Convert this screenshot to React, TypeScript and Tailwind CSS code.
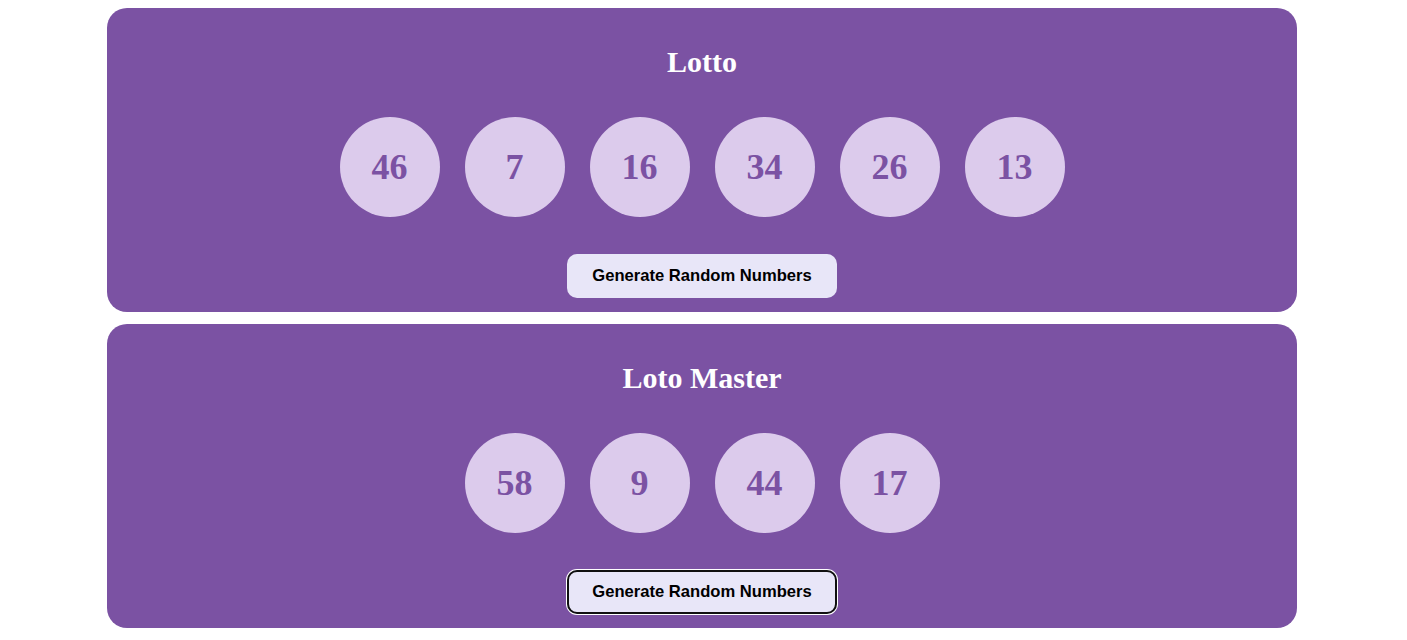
import { useState } from 'react'

const serif = { fontFamily: '"Liberation Serif", "Times New Roman", serif' }

function LottoCard({ title, numbers, focused }: { title: string; numbers: number[]; focused?: boolean }) {
  const [nums, setNums] = useState(numbers)

  const generate = () => {
    const max = title === 'Lotto' ? 49 : 59
    const picked: number[] = []
    while (picked.length < nums.length) {
      const n = Math.floor(Math.random() * max) + 1
      if (!picked.includes(n)) picked.push(n)
    }
    setNums(picked)
  }

  return (
    <div className="ml-[107px] w-[1190px] rounded-[20px] bg-[#7b52a3] pt-[36px] pb-[14px] flex flex-col items-center">
      <h1 className="text-[30px] leading-[36px] font-bold text-white" style={serif}>
        {title}
      </h1>
      <div className="mt-[37px] flex gap-[25px]">
        {nums.map((n, i) => (
          <div
            key={i}
            className="w-[100px] h-[100px] rounded-full bg-[#dccbec] flex items-center justify-center text-[36px] font-bold text-[#7b52a3]"
            style={serif}
          >
            {n}
          </div>
        ))}
      </div>
      <button
        onClick={generate}
        className={
          'mt-[37px] w-[270px] h-[44px] pt-[1px] rounded-[10px] bg-[#e8e6f8] text-[16.6px] font-bold text-black font-["Liberation_Sans",Arial,sans-serif] ' +
          (focused ? 'shadow-[inset_0_0_0_2px_#101010,0_0_0_1px_#ffffff]' : '')
        }
      >
        Generate Random Numbers
      </button>
    </div>
  )
}

export default function App() {
  return (
    <div className="min-h-[640px] bg-white pt-[8px] flex flex-col gap-[12px]">
      <LottoCard title="Lotto" numbers={[46, 7, 16, 34, 26, 13]} />
      <LottoCard title="Loto Master" numbers={[58, 9, 44, 17]} focused />
    </div>
  )
}
